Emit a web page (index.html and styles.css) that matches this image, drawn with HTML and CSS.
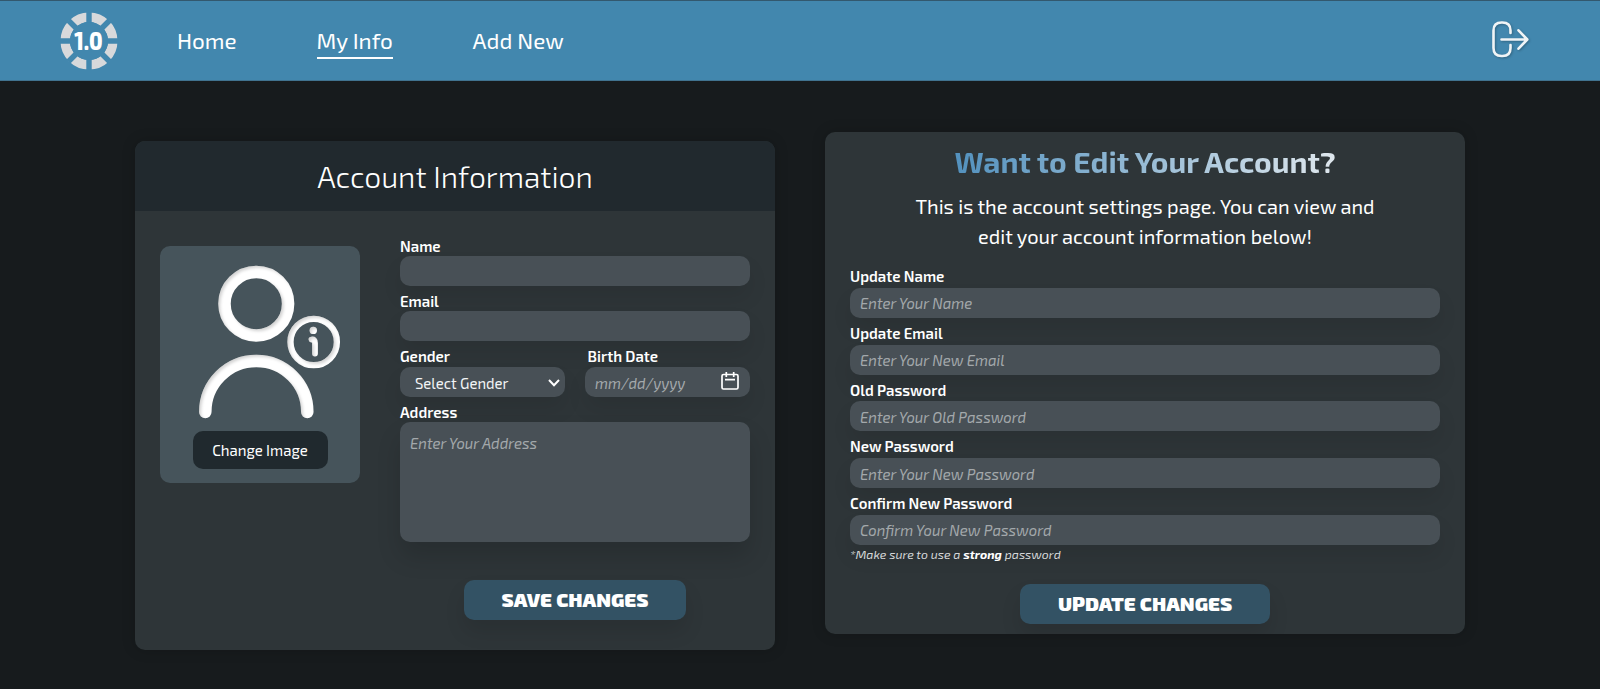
FILE: index.html
```html
<!DOCTYPE html>
<html lang="en">
<head>
<meta charset="utf-8">
<title>My Info</title>
<link rel="stylesheet" href="styles.css">
</head>
<body>
<header class="navbar">
  <svg class="logo" viewBox="0 0 58 58">
    <circle cx="29" cy="29" r="23.8" fill="none" stroke="#d8d9db" stroke-width="9.4"/>
    <g stroke="#4287ae" stroke-width="5.4">
      <path d="M29 0V58M0 29H58M8.5 8.5L49.5 49.5M49.5 8.5L8.5 49.5"/>
    </g>
    <circle cx="29" cy="29" r="19" fill="#4287ae"/>
    <text class="logo-text" x="28.500" y="37.500" text-anchor="middle" textLength="28.500" lengthAdjust="spacingAndGlyphs">1.0</text>
  </svg>
  <nav class="nav-links">
    <a class="nav-link home">Home</a>
    <a class="nav-link info active">My Info</a>
    <a class="nav-link add">Add New</a>
  </nav>
  <svg class="logout" viewBox="0 0 38 38" fill="none" stroke="#f0f4f6" stroke-width="2.600" stroke-linecap="round" stroke-linejoin="round">
    <path d="M19.500 13V10.500Q19.500 2.500 11.500 2.500H10.500Q2.500 2.500 2.500 10.500V28Q2.500 36 10.500 36H11.500Q19.500 36 19.500 28V25"/>
    <path d="M10.500 19.500H35.500M27.500 10.300L36.300 19.500L27.500 28.700"/>
  </svg>
</header>

<main class="page">
  <section class="card account">
    <h1 class="card-head"><span class="head-text">Account Information</span></h1>
    <div class="card-body">
      <div class="avatar-box">
        <svg class="avatar" viewBox="0 0 150 160" fill="none" stroke="#fff" stroke-linecap="round">
          <defs>
            <filter id="inset" x="-10%" y="-10%" width="120%" height="120%">
              <feOffset in="SourceAlpha" dx="1.500" dy="2" result="o"/>
              <feGaussianBlur in="o" stdDeviation="1.500" result="b"/>
              <feComposite in="SourceAlpha" in2="b" operator="out" result="edge"/>
              <feFlood flood-color="#000" flood-opacity=".35"/>
              <feComposite in2="edge" operator="in" result="shade"/>
              <feMerge><feMergeNode in="SourceGraphic"/><feMergeNode in="shade"/></feMerge>
            </filter>
          </defs>
          <g filter="url(#inset)">
            <circle cx="61.300" cy="43.700" r="31.800" stroke-width="12.500"/>
            <path d="M10.300 152a51 51 0 0 1 102 0" stroke-width="12.500"/>
            <circle cx="118.700" cy="82" r="23.200" stroke-width="6.300"/>
            <circle cx="118.300" cy="70.400" r="3.700" fill="#fff" stroke="none"/>
            <path d="M116.500 79.600Q120 79 120 83V93.500" stroke-width="5.800"/>
          </g>
        </svg>
        <button class="change-btn">Change Image</button>
      </div>
      <form class="account-form">
        <div class="field"><label>Name</label><div class="input"></div></div>
        <div class="field"><label>Email</label><div class="input"></div></div>
        <div class="split">
          <div class="field"><label>Gender</label>
            <div class="input select"><span class="gender">Select Gender</span>
              <svg class="chevron" viewBox="0 0 12 8" fill="none" stroke="#fff" stroke-width="2"><path d="M1 1L6 6.200L11 1"/></svg>
            </div>
          </div>
          <div class="field birth"><label>Birth Date</label>
            <div class="input date"><span class="ph date-text">mm/dd/yyyy</span>
              <svg class="calendar" viewBox="0 0 18 18" fill="none" stroke="#fff" stroke-width="1.700"><rect x="1" y="2.500" width="16" height="14.500" rx="1.500"/><path d="M4 7.700H14M5.300 0V5M12.700 0V5"/></svg>
            </div>
          </div>
        </div>
        <div class="field"><label>Address</label><div class="input area"><span class="ph">Enter Your Address</span></div></div>
        <button class="action save"><span>SAVE CHANGES</span></button>
      </form>
    </div>
  </section>

  <section class="card edit">
    <h2 class="edit-title">Want to Edit Your Account?</h2>
    <p class="intro">This is the account settings page. You can view and<br><span class="intro-second">edit your account information below!</span></p>
    <form class="edit-form">
      <div class="field"><label>Update Name</label><div class="input"><span class="ph">Enter Your Name</span></div></div>
      <div class="field"><label>Update Email</label><div class="input"><span class="ph">Enter Your New Email</span></div></div>
      <div class="field"><label>Old Password</label><div class="input"><span class="ph">Enter Your Old Password</span></div></div>
      <div class="field"><label>New Password</label><div class="input"><span class="ph">Enter Your New Password</span></div></div>
      <div class="field"><label>Confirm New Password</label><div class="input"><span class="ph">Confirm Your New Password</span></div></div>
      <p class="note">*Make sure to use a <strong>strong</strong> password</p>
      <button class="action update"><span>UPDATE CHANGES</span></button>
    </form>
  </section>
</main>
</body>
</html>
```
FILE: styles.css
```css
* { box-sizing: border-box; }
body {
  margin: 0;
  height: 689px;
  overflow: hidden;
  background: #171b1d;
  color: #fff;
  font-family: "Exo 2", Roboto, "Noto Sans", sans-serif;
  font-size: 16px;
}
h1, h2, p { margin: 0; }
button { border: 0; color: #fff; font-family: inherit; padding: 0; white-space: nowrap; }

.navbar {
  display: flex;
  align-items: flex-start;
  height: 81px;
  background: #4287ae;
  border-top: 1px solid #33586e;
  border-bottom: 1px solid #41738f;
}
.logo { width: 58px; height: 58px; margin: 11px 0 0 59.500px; }
.logo-text { fill: #fff; font-size: 24.500px; font-weight: 800; }
.nav-links { display: flex; gap: 80px; margin: 23px 0 0 59.500px; }
.nav-link { font-size: 22.500px; line-height: 33px; height: 35px; white-space: nowrap; }
.home { width: 59.500px; }
.info { width: 76px; }
.active { border-bottom: 2px solid #fff; }
.logout { width: 38px; height: 38px; margin: 19px 71.500px 0 auto; filter: drop-shadow(1px 1px 1px rgba(0, 0, 0, .25)); }

.page { display: flex; gap: 50px; padding: 51px 135px 0; align-items: flex-start; }
.card {
  width: 640px;
  border-radius: 10px;
  background: #2e3538;
  box-shadow: 0 0 14px rgba(0, 0, 0, .18);
  overflow: hidden;
}
.account { height: 509px; margin-top: 9px; }
.edit { height: 502px; text-align: center; }
.card-head {
  height: 70px;
  background: #21292e;
  text-align: center;
  font-size: 30px;
  line-height: 70px;
  font-weight: 300;
}
.card-body { display: flex; gap: 40px; padding: 0 25px; }
.avatar-box {
  display: flex;
  flex-direction: column;
  align-items: center;
  width: 200px;
  height: 237px;
  margin-top: 35px;
  padding-top: 14px;
  border-radius: 10px;
  background: #46545b;
}
.avatar { width: 150px; height: 160px; margin-left: 20px; }
.change-btn {
  width: 135px;
  height: 38px;
  margin-top: 11px;
  border-radius: 10px;
  background: #20292e;
  font-size: 15px;
}
.account-form { display: flex; flex-direction: column; width: 350px; padding-top: 20px; }
.field { display: flex; flex-direction: column; text-align: left; }
label { height: 25px; line-height: 31px; font-size: 15px; font-weight: 600; white-space: nowrap; }
.input {
  display: flex;
  align-items: center;
  height: 30px;
  padding: 1px 10px 0;
  border-radius: 10px;
  background: #485056;
  box-shadow: 0 12px 20px rgba(0, 0, 0, .08);
  white-space: nowrap;
}
.ph { color: #a3a8ab; font-style: italic; font-size: 14.900px; }
.split { display: flex; gap: 20px; }
.split .field { width: 165px; }
.split label { height: 26px; }
.birth label { padding-left: 2.500px; }
.select { justify-content: space-between; padding: 1px 5px 0 15px; }
.gender { font-size: 14.900px; color: #f2f4f5; }
.chevron { width: 12px; height: 8px; }
.date { justify-content: space-between; }
.calendar { width: 18px; height: 18px; margin: -3px 1px 0 0; }
.area { height: 120px; align-items: flex-start; padding-top: 12px; box-shadow: 0 15px 25px rgba(0, 0, 0, .14); }
.action {
  align-self: center;
  height: 40px;
  border-radius: 10px;
  background: #335264;
  font-size: 20px;
  font-weight: 900;
  box-shadow: 0 12px 20px rgba(0, 0, 0, .1);
}
.action span { display: block; padding-bottom: 2px; }
.save { width: 222px; margin-top: 38px; }
.update { width: 250px; margin-top: 20px; }

.edit-title {
  width: 400px;
  margin: 9px auto 0;
  font-size: 30px;
  line-height: 40px;
  font-weight: 700;
  white-space: nowrap;
  color: transparent;
  background: linear-gradient(90deg, #4f8fbd, #e2e9ee);
  -webkit-background-clip: text;
  background-clip: text;
}
.intro { margin-top: 10px; font-size: 20px; line-height: 30px; }
.edit-form { display: flex; flex-direction: column; padding: 10.300px 25px 0; }
.edit-form label { height: 26.700px; }
.note { height: 19.700px; text-align: left; font-size: 12.350px; line-height: 19px; font-style: italic; color: #d4d7d8; }
.note strong { color: #fff; }
```
